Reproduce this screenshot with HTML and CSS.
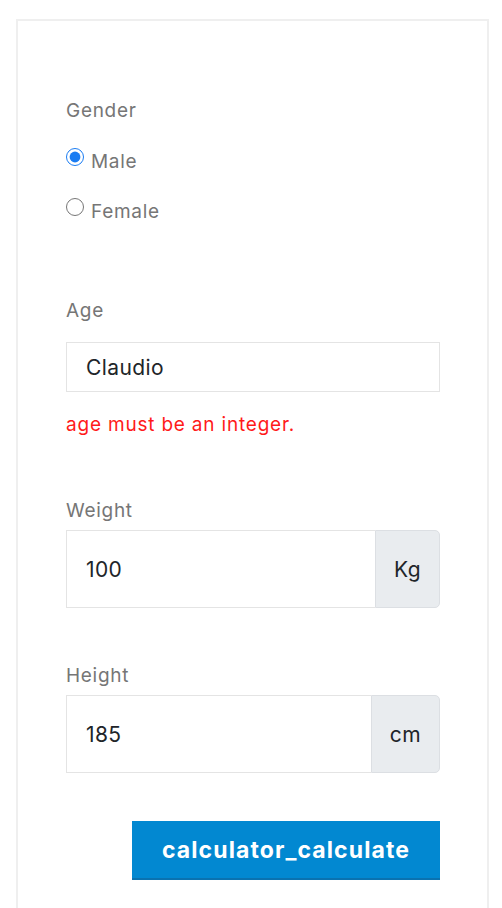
FILE: index.html
```html
<!DOCTYPE html>
<html lang="en">
<head>
<meta charset="utf-8">
<title>Calculator</title>
<link rel="stylesheet" href="styles.css">
</head>
<body>
<div class="card">
  <form class="form">
    <div class="label gender-label">Gender</div>
    <label class="radio-row">
      <input type="radio" name="gender" class="radio" checked>
      <span>Male</span>
    </label>
    <label class="radio-row">
      <input type="radio" name="gender" class="radio">
      <span>Female</span>
    </label>

    <div class="label age-label">Age</div>
    <div class="input plain">Claudio</div>
    <div class="error">age must be an integer.</div>

    <div class="label weight-label">Weight</div>
    <div class="group">
      <div class="input grouped">100</div>
      <div class="addon">Kg</div>
    </div>

    <div class="label height-label">Height</div>
    <div class="group">
      <div class="input grouped">185</div>
      <div class="addon">cm</div>
    </div>

    <div class="actions">
      <button type="button" class="btn">calculator_calculate</button>
    </div>
  </form>
</div>
</body>
</html>
```

FILE: styles.css
```css
* { box-sizing: border-box; }
html, body {
  margin: 0;
  padding: 0;
  background: #ffffff;
  font-family: Inter, "Noto Sans", sans-serif;
}
.card {
  margin: 19px 0 0 16px;
  width: 473px;
  border: 2px solid #efefef;
  border-bottom: none;
  padding: 76px 47px 120px 48px;
}
.form {
  display: flex;
  flex-direction: column;
}
.label {
  font-size: 19px;
  line-height: 27px;
  letter-spacing: 0.7px;
  color: #767676;
}
.radio-row {
  display: flex;
  align-items: flex-start;
  gap: 7px;
  font-size: 19px;
  line-height: 27px;
  letter-spacing: 0.7px;
  color: #767676;
  height: 27px;
}
.gender-label + .radio-row { margin-top: 24px; }
.radio-row + .radio-row { margin-top: 23px; }
.radio {
  width: 18px;
  height: 18px;
  margin: 0;
  accent-color: #1a7cf2;
}
.age-label { margin-top: 72px; }
.input {
  font-size: 21px;
  letter-spacing: 0.4px;
  color: #212529;
  border: 1px solid #e4e4e4;
  background: #fff;
  display: flex;
  align-items: center;
  padding: 0 19px;
}
.plain {
  height: 50px;
  margin-top: 18px;
}
.error {
  margin-top: 19px;
  font-size: 19px;
  line-height: 27px;
  letter-spacing: 0.8px;
  color: #ff1a1a;
}
.weight-label { margin-top: 59px; }
.height-label { margin-top: 54px; }
.group {
  display: flex;
  height: 78px;
  margin-top: 6px;
}
.grouped {
  flex: 1;
  border-right: none;
}
.addon {
  display: flex;
  align-items: center;
  padding: 0 18px;
  font-size: 21px;
  letter-spacing: 0.4px;
  color: #212529;
  background: #e9ecef;
  border: 1px solid #dcdfe3;
  border-radius: 0 5px 5px 0;
}
.actions {
  display: flex;
  justify-content: flex-end;
  margin-top: 48px;
}
.btn {
  width: 308px;
  height: 59px;
  border: none;
  border-bottom: 2px solid #0a72b0;
  background: #0288d1;
  color: #ffffff;
  font-family: Inter, "Noto Sans", sans-serif;
  font-weight: 700;
  font-size: 23px;
  letter-spacing: 1.1px;
  cursor: pointer;
}
```
